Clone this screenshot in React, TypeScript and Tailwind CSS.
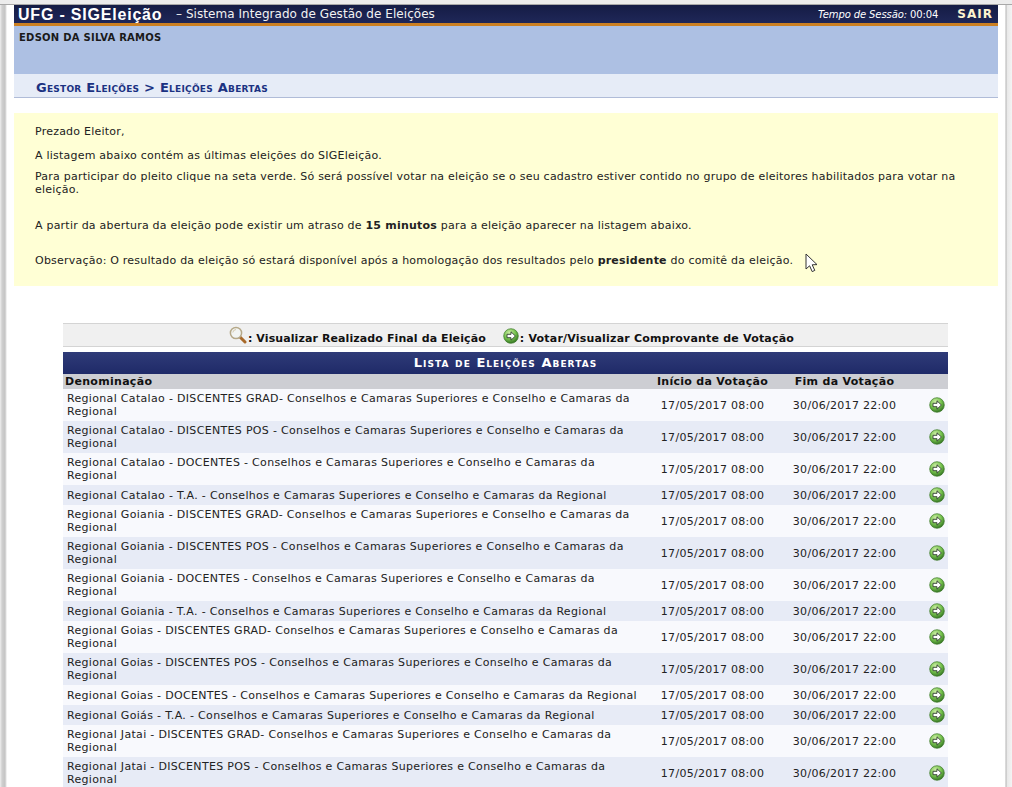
import React from 'react';

const rows: string[] = [
  'Regional Catalao - DISCENTES GRAD- Conselhos e Camaras Superiores e Conselho e Camaras da Regional',
  'Regional Catalao - DISCENTES POS - Conselhos e Camaras Superiores e Conselho e Camaras da Regional',
  'Regional Catalao - DOCENTES - Conselhos e Camaras Superiores e Conselho e Camaras da Regional',
  'Regional Catalao - T.A. - Conselhos e Camaras Superiores e Conselho e Camaras da Regional',
  'Regional Goiania - DISCENTES GRAD- Conselhos e Camaras Superiores e Conselho e Camaras da Regional',
  'Regional Goiania - DISCENTES POS - Conselhos e Camaras Superiores e Conselho e Camaras da Regional',
  'Regional Goiania - DOCENTES - Conselhos e Camaras Superiores e Conselho e Camaras da Regional',
  'Regional Goiania - T.A. - Conselhos e Camaras Superiores e Conselho e Camaras da Regional',
  'Regional Goias - DISCENTES GRAD- Conselhos e Camaras Superiores e Conselho e Camaras da Regional',
  'Regional Goias - DISCENTES POS - Conselhos e Camaras Superiores e Conselho e Camaras da Regional',
  'Regional Goias - DOCENTES - Conselhos e Camaras Superiores e Conselho e Camaras da Regional',
  'Regional Goiás - T.A. - Conselhos e Camaras Superiores e Conselho e Camaras da Regional',
  'Regional Jatai - DISCENTES GRAD- Conselhos e Camaras Superiores e Conselho e Camaras da Regional',
  'Regional Jatai - DISCENTES POS - Conselhos e Camaras Superiores e Conselho e Camaras da Regional',
];

function GoIcon() {
  return (
    <svg width="16" height="16" viewBox="0 0 16 16" className="block">
      <defs>
        <radialGradient id="go" cx="40%" cy="30%" r="75%">
          <stop offset="0%" stopColor="#d0f0a8" />
          <stop offset="55%" stopColor="#74c04c" />
          <stop offset="100%" stopColor="#2c6b1e" />
        </radialGradient>
      </defs>
      <circle cx="8" cy="8" r="7.3" fill="url(#go)" stroke="#3d7a2a" strokeWidth="0.7" />
      <path d="M8 3.8 L12.4 8 L8 12.2 V9.7 H4 V6.3 H8 Z" fill="#fff" stroke="#2f3d2f" strokeWidth="0.9" strokeLinejoin="round" />
    </svg>
  );
}

function LensIcon() {
  return (
    <svg width="18" height="18" viewBox="0 0 18 18" className="block">
      <path d="M10.5 10.5 L16 16" stroke="#a8692a" strokeWidth="3" strokeLinecap="round" />
      <circle cx="7" cy="7" r="5.6" fill="#f2f4f2" stroke="#b5a888" strokeWidth="1.5" />
      <path d="M3.8 6.5 A3.5 3.5 0 0 1 7 3.5" fill="none" stroke="#d4c9ae" strokeWidth="1" />
    </svg>
  );
}

export default function App() {
  return (
    <div className="h-[787px] overflow-hidden bg-white font-['DejaVu_Sans',Verdana,sans-serif] text-[11px] leading-[13px] text-[#222]">
      <div className="h-[5px] border-b border-[#a8a8a8] bg-[#ececec]" />
      <div className="flex">
        <div className="h-[782px] w-[14px] shrink-0 bg-[linear-gradient(to_right,#efefef_0px,#d0d0d0_2px,#c4c4c4_5px,#ffffff_7px)]" />
        <div className="w-[984px] shrink-0">
          <div className="flex h-[18px] items-center bg-[linear-gradient(to_bottom,#151c45,#1f2758)] text-white">
            <span className="ml-[4px] w-[158px] font-['Liberation_Sans',sans-serif] text-[16px] font-bold tracking-[0.8px]">UFG - SIGEleição</span>
            <span className="text-[12px] tracking-[0.05px] text-[#f2f2f2]">– Sistema Integrado de Gestão de Eleições</span>
            <span className="ml-auto text-[10px] italic tracking-[-0.1px]">Tempo de Sessão: <span className="not-italic">00:04</span></span>
            <span className="mr-[5px] ml-[19px] text-[12px] font-bold tracking-[1px] text-[#fdf3cf]">SAIR</span>
          </div>
          <div className="h-[3px] bg-[#cc8022]" />
          <div className="h-[48px] bg-[#adc0e3] px-[5px] pt-[5px] text-[10px] font-bold tracking-[0.25px] text-[#1a1a1a]">EDSON DA SILVA RAMOS</div>
          <div className="flex h-[24px] items-center border-b border-[#b0bcd8] bg-[#e6ecf7] pl-[22px] pt-[3px] text-[13px] font-bold tracking-[0.25px] text-[#1b3282] [font-variant:small-caps]">
            Gestor Eleições &gt; Eleições Abertas
          </div>

          <div className="relative mt-[15px] h-[173px] bg-[#ffffd5] pl-[21px] pr-[20px] pt-[12px] tracking-[0.22px]">
            <p>Prezado Eleitor,</p>
            <p className="mt-[11px]">A listagem abaixo contém as últimas eleições do SIGEleição.</p>
            <p className="mt-[8px]">Para participar do pleito clique na seta verde. Só será possível votar na eleição se o seu cadastro estiver contido no grupo de eleitores habilitados para votar na eleição.</p>
            <p className="mt-[23px]">A partir da abertura da eleição pode existir um atraso de <b>15 minutos</b> para a eleição aparecer na listagem abaixo.</p>
            <p className="mt-[22px]">Observação: O resultado da eleição só estará disponível após a homologação dos resultados pelo <b>presidente</b> do comitê da eleição.</p>
            <svg width="14" height="20" viewBox="0 0 14 20" className="absolute left-[791px] top-[140px]">
              <path d="M1 1 V16 L4.6 12.8 L7.2 18.6 L9.8 17.4 L7.2 11.8 L12 11.6 Z" fill="#fff" stroke="#333" strokeWidth="1" strokeLinejoin="round" />
            </svg>
          </div>

          <div className="mx-[49px] mt-[37px] w-[885px]">
            <div className="flex h-[24px] items-center justify-center border-y border-[#d4d4d4] bg-[#f0f0f0] pl-[12px] font-bold text-[#111]">
              <LensIcon />
              <span className="ml-[1px] pt-[7px] tracking-[0.1px]">: Visualizar Realizado Final da Eleição</span>
              <span className="ml-[17px] pt-[2px]"><GoIcon /></span>
              <span className="ml-[1px] pt-[7px] tracking-[0.2px]">: Votar/Visualizar Comprovante de Votação</span>
            </div>
            <div className="mt-[5px] flex h-[22px] items-center justify-center bg-[linear-gradient(to_bottom,#2f3b78,#1f2a68)] pb-[2px] text-[13px] font-bold tracking-[1.05px] text-white [font-variant:small-caps]">
              Lista de Eleições Abertas
            </div>
            <table className="w-full table-fixed border-collapse tracking-[0.3px]">
              <colgroup>
                <col className="w-[590px]" />
                <col className="w-[119px]" />
                <col className="w-[145px]" />
                <col className="w-[31px]" />
              </colgroup>
              <thead>
                <tr className="h-[15px] bg-[#cdced3] font-bold text-[#111]">
                  <th className="pl-[2px] text-left font-bold">Denominação</th>
                  <th className="text-center font-bold">Início da Votação</th>
                  <th className="text-center font-bold">Fim da Votação</th>
                  <th />
                </tr>
              </thead>
              <tbody>
                {rows.map((name, i) => (
                  <tr key={name} className={i % 2 === 0 ? 'bg-[#f8f9fd]' : 'bg-[#e7ebf6]'}>
                    <td className="h-[20px] py-[3px] pl-[4px] pr-[12px] align-middle tracking-[0.32px]">{name}</td>
                    <td className="text-center align-middle">17/05/2017 08:00</td>
                    <td className="text-center align-middle">30/06/2017 22:00</td>
                    <td className="align-middle"><div className="flex justify-end pr-[3px]"><GoIcon /></div></td>
                  </tr>
                ))}
              </tbody>
            </table>
          </div>
        </div>
        <div className="h-[782px] w-[14px] shrink-0 bg-[linear-gradient(to_right,#ffffff_7px,#b4b4b4_8px,#e8e8e8_9px,#f4f4f4_14px)]" />
      </div>
    </div>
  );
}
